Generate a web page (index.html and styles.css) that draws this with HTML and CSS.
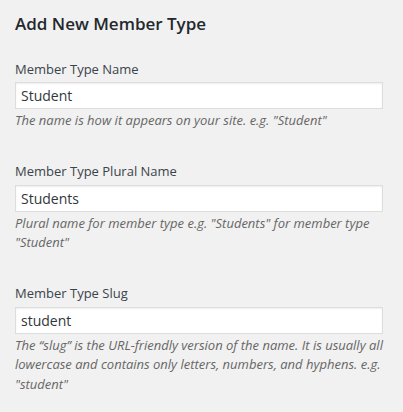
FILE: index.html
```html
<!DOCTYPE html>
<html lang="en">
<head>
<meta charset="utf-8">
<title>Add New Member Type</title>
<link rel="stylesheet" href="styles.css">
</head>
<body>
<div class="form-wrap">
  <h2 class="form-title">Add New Member Type</h2>
  <div class="form-field">
    <label class="field-label" for="mt-name">Member Type Name</label>
    <input class="field-input" id="mt-name" type="text" value="Student">
    <p class="description">The name is how it appears on your site. e.g. "Student"</p>
  </div>
  <div class="form-field">
    <label class="field-label" for="mt-plural">Member Type Plural Name</label>
    <input class="field-input" id="mt-plural" type="text" value="Students">
    <p class="description">Plural name for member type e.g. "Students" for member type "Student"</p>
  </div>
  <div class="form-field">
    <label class="field-label" for="mt-slug">Member Type Slug</label>
    <input class="field-input" id="mt-slug" type="text" value="student">
    <p class="description">The “slug” is the URL-friendly version of the name. It is usually all lowercase and contains only letters, numbers, and hyphens. e.g. "student"</p>
  </div>
</div>
</body>
</html>
```
FILE: styles.css
```css
html, body {
  margin: 0;
  padding: 0;
  background: #f1f1f1;
}

body {
  font-family: "Open Sans", "Liberation Sans", sans-serif;
  font-size: 13px;
  color: #444;
}

.form-wrap {
  width: 368px;
  padding: 12px 20px 0 15px;
}

.form-title {
  margin: 0 0 23.5px;
  font-size: 17px;
  font-weight: 600;
  line-height: 24px;
  color: #23282d;
}

.form-field {
  margin: 0 0 31.5px;
}

.field-label {
  display: block;
  margin: 0 0 3px;
  line-height: 19.5px;
  color: #3c434a;
}

.field-input {
  display: block;
  box-sizing: border-box;
  width: 100%;
  height: 27px;
  margin: 0;
  padding: 0 5px;
  border: 1px solid #ddd;
  background: #fff;
  box-shadow: inset 0 1px 2px rgba(0, 0, 0, 0.07);
  font-family: "Open Sans", "Liberation Sans", sans-serif;
  font-size: 14px;
  color: #32373c;
  outline: none;
}

.description {
  margin: 2px 0 0;
  font-style: italic;
  line-height: 19.5px;
  color: #666;
}
```
